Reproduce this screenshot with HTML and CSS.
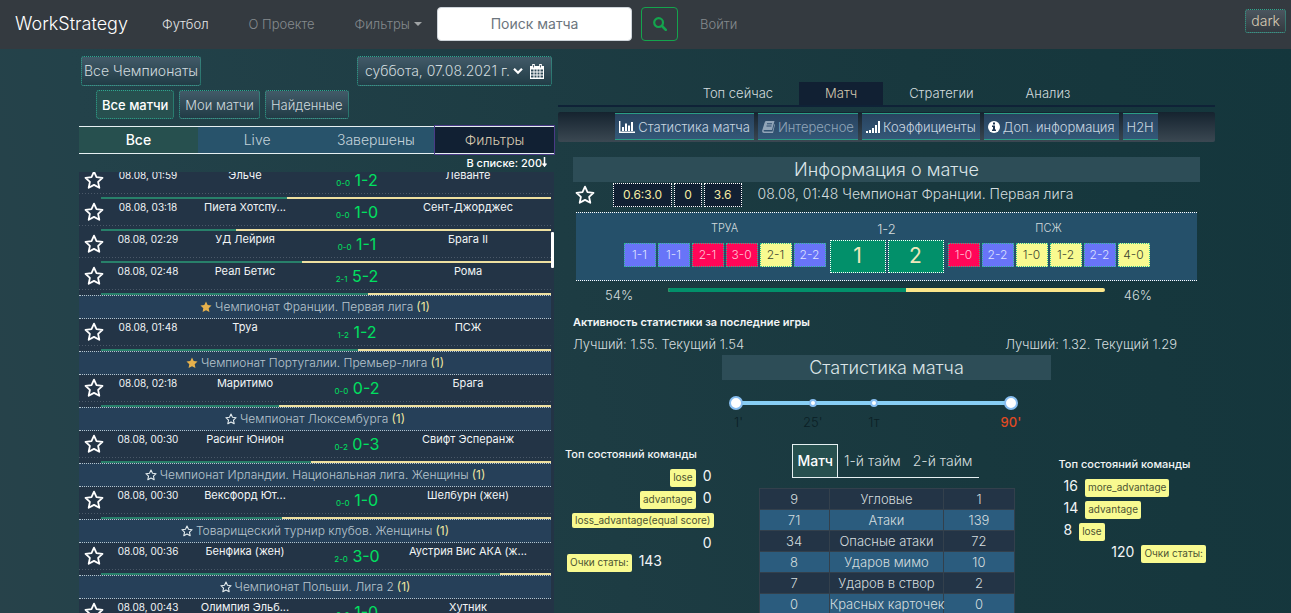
FILE: index.html
```html
<!DOCTYPE html>
<html lang="ru">
<head>
<meta charset="utf-8">
<title>WorkStrategy</title>
<link rel="stylesheet" href="styles.css">
</head>
<body>
<svg class="sprite" aria-hidden="true">
  <symbol id="star" viewBox="0 0 20 20"><path d="M10 1.6l2.5 5.5 6 .7-4.4 4.1 1.2 5.9L10 14.9l-5.3 2.9 1.2-5.9L1.5 7.8l6-.7z" fill="none" stroke="currentColor" stroke-width="1.8" stroke-linejoin="round"/></symbol>
  <symbol id="star-full" viewBox="0 0 20 20"><path d="M10 1l2.8 5.8 6.4.8-4.7 4.4 1.2 6.4L10 15.300l-5.700 3.100 1.200-6.400L.8 7.600l6.400-.8z" fill="currentColor"/></symbol>
</svg>

<header class="navbar">
  <a class="brand" href="#">WorkStrategy</a>
  <nav class="nav-links">
    <a class="active" href="#">Футбол</a>
    <a href="#">О Проекте</a>
    <a class="dropdown" href="#">Фильтры</a>
  </nav>
  <form class="search">
    <input type="text" placeholder="Поиск матча" aria-label="Поиск матча">
    <button type="button" aria-label="Искать"><svg width="14" height="14" viewBox="0 0 14 14"><circle cx="5.600" cy="5.600" r="4.400" fill="none" stroke="currentColor" stroke-width="2.200"/><path d="M9 9l3.800 3.800" stroke="currentColor" stroke-width="2.600" stroke-linecap="round"/></svg></button>
  </form>
  <a class="login" href="#">Войти</a>
  <button class="soft theme" type="button">dark</button>
</header>

<main class="page">
  <section class="matches">
    <div class="top-row">
      <button class="soft" type="button">Все Чемпионаты</button>
      <button class="soft date" type="button">суббота, 07.08.2021 г.
        <svg width="10" height="8" viewBox="0 0 10 8"><path d="M1 1.800l4 4 4-4" fill="none" stroke="#fff" stroke-width="2.200"/></svg>
        <svg class="calendar" width="14" height="15" viewBox="0 0 14 15"><path d="M0 2h14v13H0z" fill="currentColor"/><path d="M3.500 0v4M10.500 0v4" stroke="#fff" stroke-width="2.600"/><path d="M3.500 1v2.500M10.500 1v2.500" stroke="#345" stroke-width=".8"/><path d="M1 5.500h2.500v2H1zM4.500 5.500h2v2h-2zM7.500 5.500h2v2h-2zM10.500 5.500h2.500v2h-2.500zM1 8.500h2.500v2H1zM4.500 8.500h2v2h-2zM7.500 8.500h2v2h-2zM10.500 8.500h2.500v2h-2.500zM1 11.500h2.500v2H1zM4.500 11.500h2v2h-2zM7.500 11.500h2v2h-2zM10.500 11.500h2.500v2h-2.500z" fill="#2f4a58"/></svg>
      </button>
    </div>
    <div class="scope-row">
      <button class="soft on" type="button">Все матчи</button>
      <button class="soft" type="button">Мои матчи</button>
      <button class="soft" type="button">Найденные</button>
    </div>
    <div class="status-tabs">
      <button class="on" type="button">Все</button>
      <button type="button">Live</button>
      <button type="button">Завершены</button>
      <button class="filters" type="button">Фильтры</button>
    </div>
    <div class="count">В списке: 200<svg width="5" height="10" viewBox="0 0 5 10"><path d="M2.500 0v9M.5 6.500l2 2.500 2-2.500" fill="none" stroke="currentColor" stroke-width="1.500"/></svg></div>

    <div class="viewport">
      <div class="list">
        <article class="match"><button class="fav" type="button" aria-label="В избранное"><svg><use href="#star"/></svg></button><time>08.08, 01:59</time><span class="team">Эльче</span><span class="score"><small>0-0</small> 1-2</span><span class="team">Леванте</span><i class="bar"><b style="width:41.3%"></b></i></article>
        <article class="match"><button class="fav" type="button" aria-label="В избранное"><svg><use href="#star"/></svg></button><time>08.08, 03:18</time><span class="team">Пиета Хотспу...</span><span class="score"><small>0-0</small> 1-0</span><span class="team">Сент-Джорджес</span><i class="bar"><b style="width:30%"></b></i></article>
        <article class="match"><button class="fav" type="button" aria-label="В избранное"><svg><use href="#star"/></svg></button><time>08.08, 02:29</time><span class="team">УД Лейрия</span><span class="score"><small>0-0</small> 1-1</span><span class="team">Брага II</span><i class="bar"><b style="width:44.7%"></b></i></article>
        <article class="match"><button class="fav" type="button" aria-label="В избранное"><svg><use href="#star"/></svg></button><time>08.08, 02:48</time><span class="team">Реал Бетис</span><span class="score"><small>2-1</small> 5-2</span><span class="team">Рома</span><i class="bar"><b style="width:59.3%"></b></i></article>
        <h3 class="league"><svg class="gold"><use href="#star-full"/></svg>Чемпионат Франции. Первая лига <em>(1)</em></h3>
        <article class="match"><button class="fav" type="button" aria-label="В избранное"><svg><use href="#star"/></svg></button><time>08.08, 01:48</time><span class="team">Труа</span><span class="score"><small>1-2</small> 1-2</span><span class="team">ПСЖ</span><i class="bar"><b style="width:57.1%"></b></i></article>
        <h3 class="league"><svg class="gold"><use href="#star-full"/></svg>Чемпионат Португалии. Премьер-лига <em>(1)</em></h3>
        <article class="match"><button class="fav" type="button" aria-label="В избранное"><svg><use href="#star"/></svg></button><time>08.08, 02:18</time><span class="team">Маритимо</span><span class="score"><small>0-0</small> 0-2</span><span class="team">Брага</span><i class="bar"><b style="width:39.6%"></b></i></article>
        <h3 class="league"><svg><use href="#star"/></svg>Чемпионат Люксембурга <em>(1)</em></h3>
        <article class="match"><button class="fav" type="button" aria-label="В избранное"><svg><use href="#star"/></svg></button><time>08.08, 00:30</time><span class="team">Расинг Юнион</span><span class="score"><small>0-2</small> 0-3</span><span class="team">Свифт Эсперанж</span><i class="bar"><b style="width:46.7%"></b></i></article>
        <h3 class="league"><svg><use href="#star"/></svg>Чемпионат Ирландии. Национальная лига. Женщины <em>(1)</em></h3>
        <article class="match"><button class="fav" type="button" aria-label="В избранное"><svg><use href="#star"/></svg></button><time>08.08, 00:30</time><span class="team">Вексфорд Ют...</span><span class="score"><small>0-0</small> 1-0</span><span class="team">Шелбурн (жен)</span><i class="bar"><b style="width:40.2%"></b></i></article>
        <h3 class="league"><svg><use href="#star"/></svg>Товарищеский турнир клубов. Женщины <em>(1)</em></h3>
        <article class="match"><button class="fav" type="button" aria-label="В избранное"><svg><use href="#star"/></svg></button><time>08.08, 00:36</time><span class="team">Бенфика (жен)</span><span class="score"><small>2-0</small> 3-0</span><span class="team">Аустрия Вис АКА (ж...</span><i class="bar"><b style="width:88.7%"></b></i></article>
        <h3 class="league"><svg><use href="#star"/></svg>Чемпионат Польши. Лига 2 <em>(1)</em></h3>
        <article class="match"><button class="fav" type="button" aria-label="В избранное"><svg><use href="#star"/></svg></button><time>08.08, 00:43</time><span class="team">Олимпия Эльб...</span><span class="score"><small>0-0</small> 1-0</span><span class="team">Хутник</span><i class="bar"><b style="width:50%"></b></i></article>
      </div>
    </div>
  </section>

  <section class="details">
    <nav class="main-tabs">
      <a href="#">Топ сейчас</a>
      <a class="on" href="#">Матч</a>
      <a href="#">Стратегии</a>
      <a href="#">Анализ</a>
    </nav>
    <div class="toolbar">
      <button type="button"><svg width="16" height="12" viewBox="0 0 16 12"><path d="M.700 0v11.300H16" fill="none" stroke="currentColor" stroke-width="1.400"/><path d="M4 10V6M7 10V2.500M10 10V4.500M13 10V1" stroke="currentColor" stroke-width="2"/></svg>Статистика матча</button>
      <button class="muted" type="button"><svg width="13" height="12" viewBox="0 0 13 12"><path d="M4 0h8.500L10 9H2.500q-1 0-1 .700T2.500 10.500h8L12.500 3l.5.500-2 8.500H2Q-.3 12 .2 9.500L2.500 2Q3 .2 4 0z" fill="currentColor"/><path d="M5 2.800h5M4.500 5h5" stroke="#2c4a6c"/></svg>Интересное</button>
      <button type="button"><svg width="14" height="12" viewBox="0 0 14 12"><path d="M1 12v-2M4 12V9M7 12V7M10 12V4M13 12V0" stroke="currentColor" stroke-width="2"/></svg>Коэффициенты</button>
      <button type="button"><svg width="12" height="12" viewBox="0 0 12 12"><circle cx="6" cy="6" r="6" fill="#fff"/><path d="M5 1.500h2v2H5zM4 4.500h3v4h1V10H4V8.500h1V6H4z" fill="#1d3450"/></svg>Доп. информация</button>
      <button type="button">H2H</button>
    </div>

    <div class="info">
      <h2 class="title">Информация о матче</h2>
      <div class="meta">
        <button class="fav" type="button" aria-label="В избранное"><svg><use href="#star"/></svg></button>
        <div class="odds"><span>0.6:3.0</span><span>0</span><span>3.6</span></div>
        <span class="when">08.08, 01:48 Чемпионат Франции. Первая лига</span>
      </div>
      <div class="board">
        <div class="side">
          <span class="name">ТРУА</span>
          <div class="chips"><span class="draw">1-1</span><span class="draw">1-1</span><span class="loss">2-1</span><span class="loss">3-0</span><span class="win">2-1</span><span class="draw">2-2</span></div>
        </div>
        <div class="middle">
          <span class="half">1-2</span>
          <div class="goals"><span>1</span><span>2</span></div>
        </div>
        <div class="side">
          <span class="name">ПСЖ</span>
          <div class="chips"><span class="loss">1-0</span><span class="draw">2-2</span><span class="win">1-0</span><span class="win">1-2</span><span class="draw">2-2</span><span class="win">4-0</span></div>
        </div>
      </div>
      <div class="share"><span>54%</span><div class="share-bar"><b style="width:54.4%"></b></div><span>46%</span></div>
      <h4 class="activity">Активность статистики за последние игры</h4>
      <div class="best"><span>Лучший: 1.55. Текущий 1.54</span><span>Лучший: 1.32. Текущий 1.29</span></div>
    </div>

    <h2 class="title narrow">Статистика матча</h2>
    <div class="period">
      <div class="rail"><i style="left:28%"></i><i style="left:50.2%"></i></div>
      <input type="range" min="0" max="90" value="0" aria-label="Начало периода">
      <input type="range" min="0" max="90" value="90" aria-label="Конец периода">
      <div class="marks"><span style="left:1%">1'</span><span style="left:28%">25'</span><span style="left:50.2%">1т</span><span class="end" style="left:100%">90'</span></div>
    </div>

    <div class="stats">
      <div class="states home">
        <h4>Топ состояний команды</h4>
        <p><mark>lose</mark><b>0</b></p>
        <p><mark>advantage</mark><b>0</b></p>
        <p class="long"><mark>loss_advantage(equal score)</mark><b>0</b></p>
        <p class="total"><mark>Очки статы:</mark><b>143</b></p>
      </div>
      <div class="center">
        <div class="half-tabs"><button class="on" type="button">Матч</button><button type="button">1-й тайм</button><button type="button">2-й тайм</button></div>
        <table>
          <tr><td>9</td><td>Угловые</td><td>1</td></tr>
          <tr><td>71</td><td>Атаки</td><td>139</td></tr>
          <tr><td>34</td><td>Опасные атаки</td><td>72</td></tr>
          <tr><td>8</td><td>Ударов мимо</td><td>10</td></tr>
          <tr><td>7</td><td>Ударов в створ</td><td>2</td></tr>
          <tr><td>0</td><td>Красных карточек</td><td>0</td></tr>
        </table>
      </div>
      <div class="states away">
        <h4>Топ состояний команды</h4>
        <p><b>16</b><mark>more_advantage</mark></p>
        <p><b>14</b><mark>advantage</mark></p>
        <p><b>8</b><mark>lose</mark></p>
        <p class="total"><b>120</b><mark>Очки статы:</mark></p>
      </div>
    </div>
  </section>
</main>
</body>
</html>
```

FILE: styles.css
```css
* { box-sizing: border-box; }

body {
  margin: 0;
  height: 100vh;
  overflow: hidden;
  display: flex;
  flex-direction: column;
  background: linear-gradient(80deg, #27424a 0%, #23424a 12%, #1d3c43 45%, #18383e 72%, #14363c 100%);
  color: #d3dcde;
  font: 300 13px/20px Inter, "Open Sans", sans-serif;
}

button, input { font: inherit; color: inherit; }
button { padding: 0; cursor: pointer; white-space: nowrap; }
a { color: inherit; text-decoration: none; }
h2, h3, h4, p { margin: 0; font-weight: 300; }
.sprite { position: absolute; width: 0; height: 0; }

/* Navbar */
.navbar {
  display: flex;
  align-items: center;
  flex: none;
  height: 49px;
  padding: 0 5px 2px 15px;
  background: #343a40;
}
.brand { width: 147px; font-size: 18px; color: #fff; }
.nav-links { display: flex; gap: 40px; width: 275px; color: #858a8e; }
.nav-links .active { color: #e6e8e9; }
.dropdown::after {
  content: "";
  display: inline-block;
  margin-left: 4px;
  vertical-align: 3px;
  border: 4px solid transparent;
  border-top-color: #a0a4a6;
  border-bottom: 0;
}
.search { display: flex; gap: 9px; }
.search input {
  width: 195px;
  height: 34px;
  padding: 0 10px;
  border: 1px solid #ced4da;
  border-radius: 4px;
  background: #fff;
  color: #495057;
  text-align: center;
  font-size: 14px;
}
.search input::placeholder { color: #6c757d; opacity: 1; font-weight: 400; }
.search button {
  display: grid;
  place-items: center;
  width: 37px;
  height: 34px;
  border: 1px solid #14a44d;
  border-radius: 4px;
  background: none;
  color: #14a44d;
}
.login { margin-left: 22px; color: #858a8e; }

.soft {
  height: 30px;
  padding: 0 2px;
  border: 1px dotted #2fa890;
  border-radius: 3px;
  background: linear-gradient(#425a68, #213c46);
  color: #cfd9dd;
  font-size: 14px;
}
.theme {
  height: 24px;
  padding: 0 5px;
  margin: 0 0 5px auto;
  background: linear-gradient(#4b565f, #343a40);
  color: #d9ccb4;
  line-height: 18px;
}

/* Columns */
.page {
  flex: 1;
  min-height: 0;
  display: grid;
  grid-template-columns: 475fr 657fr;
  gap: 4px;
  padding: 0 76px 0 79px;
}

/* Match list */
.matches { display: flex; flex-direction: column; min-width: 0; min-height: 0; }
.top-row { display: flex; justify-content: space-between; padding: 7px 2px 4px; }
.date { display: flex; align-items: center; gap: 3px; padding: 0 7px; }
.calendar { margin-left: 4px; color: #fff; }
.scope-row { display: flex; gap: 5px; padding-left: 17px; }
.scope-row .soft { height: 29px; padding: 0 5px; font-size: 13px; }
.scope-row .on { background: #27504f; color: #fff; font-weight: 500; }
.status-tabs { display: grid; grid-template-columns: repeat(4, 1fr); margin-top: 7px; }
.status-tabs button {
  height: 28px;
  border: solid #e6f0f2;
  border-width: 1px 0;
  background: #28536b;
  color: #c3d2da;
  font-size: 14px;
}
.status-tabs .on { background: #27504f; color: #fff; font-weight: 500; }
.status-tabs .filters {
  background: #112033;
  color: #d6c9b0;
  outline: 1px solid #4a3a86;
}
.count {
  height: 18px;
  padding-right: 7px;
  text-align: right;
  font-size: 11px;
  line-height: 18px;
  font-weight: 500;
  color: #fff;
}
.viewport { position: relative; flex: 1; min-height: 0; overflow: hidden; background: #233446; }
.viewport::after {
  content: "";
  position: absolute;
  top: 60px;
  right: 0;
  width: 3px;
  height: 36px;
  border-radius: 1px;
  background: #fff;
}
.list { margin: -5px 3px 0 0; }
.match {
  display: grid;
  grid-template-columns: 30fr 78fr 116fr 108fr minmax(0, 114fr) 26fr;
  grid-template-rows: 27px 5px;
  background: linear-gradient(90deg, #4a5868 1px, transparent 1px) 0 26px / 3px 1px repeat-x;
  text-align: center;
  font-size: 11px;
  line-height: 16px;
  font-weight: 400;
  color: #f2f5f6;
}
.match time { font-size: 10px; }
.fav { border: 0; background: none; color: #fff; }
.fav svg { display: block; width: 20px; height: 20px; }
.match .fav { align-self: start; padding: 3px 0 0 5px; }
.match .team { display: flex; justify-content: center; white-space: nowrap; }
.score { font-size: 16px; line-height: 27px; color: #00e060; }
.score small { font-size: 8px; }
.bar {
  grid-column: 1 / -1;
  height: 2px;
  margin: 3px 0 0 22px;
  background: #eee0a0;
}
.bar b { display: block; height: 2px; background: #28806a; }
.league {
  display: flex;
  align-items: center;
  justify-content: center;
  height: 24px;
  border: dotted #b5c3cc;
  border-width: 1px 0;
  background: #264059;
  font-size: 12px;
  color: #b8c5ce;
}
.league svg { width: 12px; height: 12px; margin-right: 3px; color: #e5edf0; }
.league .gold { color: #e5b04c; }
.league em { margin-left: 3px; font-style: normal; font-weight: 400; color: #eee6a0; }

/* Details */
.details { min-width: 0; }
.main-tabs {
  display: flex;
  justify-content: center;
  margin-top: 33px;
  border-bottom: 2px solid #0f2237;
}
.main-tabs a { padding: 0 26px; line-height: 23px; color: #d3dcde; }
.main-tabs .on { background: #112033; color: #d6c9b0; }
.toolbar {
  display: flex;
  justify-content: center;
  gap: 4px;
  height: 30px;
  margin-top: 5px;
  padding: 1px 0 2px;
  border-radius: 2px;
  background: linear-gradient(#15232f, #3b4852);
}
.toolbar button {
  display: flex;
  align-items: center;
  gap: 3px;
  padding: 0 4px;
  border: solid #2a9d85;
  border-width: 1px 0;
  background: linear-gradient(#28435f, #345878);
  color: #c9d6e0;
}
.toolbar svg { color: #fff; }
.toolbar .muted, .toolbar .muted svg { color: #91a5b8; }

.info { padding: 15px 15px 0; }
.title {
  height: 25px;
  background: #2d4d57;
  text-align: center;
  font-size: 18px;
  line-height: 25px;
  color: #dce5e8;
}
.narrow { width: 50%; margin: 1px auto 0; }
.meta { display: flex; align-items: center; height: 26px; padding-left: 2px; }
.odds { display: flex; gap: 2px; margin: 0 16px 0 18px; }
.odds span {
  height: 24px;
  padding: 0 9px;
  border: 1px dotted #fff;
  background: #112033;
  font-size: 12px;
  line-height: 21px;
  font-weight: 400;
  color: #f4eca4;
}
.when { padding-bottom: 2px; font-size: 14px; }
.board {
  display: flex;
  justify-content: center;
  gap: 4px;
  height: 69px;
  margin: 4px 3px 0;
  border: dotted #fff;
  border-width: 1px 0;
  background: #25506a;
  text-align: center;
}
.name { display: block; padding-top: 6px; font-size: 11px; line-height: 18px; }
.chips { display: flex; gap: 2px; margin-top: 6px; }
.chips span {
  width: 32px;
  height: 24px;
  border: 1px dotted #2fb890;
  font-size: 12px;
  line-height: 22px;
}
.chips .draw { background: #6874f8; color: #dfe3ff; }
.chips .loss { background: #ff0558; color: #ffc4d6; }
.chips .win { background: #f8fa90; color: #3c4430; }
.half { display: block; padding-top: 6px; line-height: 20px; }
.goals { display: flex; gap: 2px; margin-top: 1px; }
.goals span {
  width: 56px;
  height: 33px;
  border: 1px dotted #fff;
  background: #02906a;
  font-size: 21px;
  line-height: 30px;
  font-weight: 400;
  color: #eee8bc;
}
.share { display: flex; padding: 4px 48px 0 32px; }
.share-bar { flex: 1; height: 4px; margin: 3px 19px 0 35px; border-radius: 2px; overflow: hidden; background: #fbe68a; }
.share-bar b { display: block; height: 4px; background: #02906a; }
.activity { margin-top: 7px; font-size: 11px; font-weight: 600; color: #f2f5f6; }
.best { display: flex; justify-content: space-between; padding: 2px 23px 0 0; line-height: 20px; }

/* Period slider */
.period { position: relative; width: 44%; margin: 15px 0 0 26%; padding-top: 6px; }
.rail { position: relative; height: 4px; margin: 0 7px; background: #87cef5; }
.rail i {
  position: absolute;
  top: -2px;
  width: 8px;
  height: 8px;
  margin-left: -4px;
  border: 2px solid #87bdf0;
  border-radius: 50%;
  background: #fff;
}
.period input {
  position: absolute;
  top: 1px;
  left: 0;
  width: 100%;
  height: 14px;
  margin: 0;
  appearance: none;
  background: none;
  pointer-events: none;
}
.period input::-webkit-slider-thumb {
  appearance: none;
  width: 14px;
  height: 14px;
  border: 2px solid #87bdf0;
  border-radius: 50%;
  background: #fff;
  pointer-events: auto;
}
.marks { position: relative; height: 28px; margin: 3px 7px 0; color: #0b2025; }
.marks span { position: absolute; top: 4px; transform: translateX(-50%); }
.marks .end { font-weight: 500; color: #e04a22; }

/* Team states and stats table */
.stats { display: grid; grid-template-columns: 1fr 256px 1fr; gap: 44px; margin-top: 8px; }
.states h4 { font-size: 11px; line-height: 20px; font-weight: 500; color: #f2f5f6; }
.states p { display: flex; align-items: flex-start; gap: 7px; height: 22px; }
.states mark {
  height: 18px;
  padding: 0 3px;
  border-radius: 2px;
  background: #f8fa90;
  font-size: 10px;
  line-height: 16px;
  font-weight: 400;
  color: #4d5433;
  white-space: nowrap;
}
.states b { font-size: 14px; line-height: 14px; font-weight: 400; color: #f2f5f6; }
.home { padding: 0 3px 0 7px; }
.home h4 { margin-bottom: 5px; }
.home p { justify-content: flex-end; }
.home .long { flex-wrap: wrap; height: 41px; gap: 4px; margin-right: -2px; }
.home .long mark { height: 15px; line-height: 14px; }
.home .long b { padding-right: 2px; }
.home .total { justify-content: flex-start; padding-left: 2px; }
.away { padding: 10px 9px 0 0; }
.away h4 { margin-bottom: 5px; }
.away p { padding-left: 5px; }
.away .total { justify-content: flex-end; }
.half-tabs { display: flex; justify-content: center; padding-right: 2px; }
.half-tabs button {
  height: 34px;
  padding: 0 6px;
  border: 0 solid #e6f0f2;
  border-bottom-width: 1px;
  background: none;
  font-size: 14px;
}
.half-tabs .on { padding: 0 4px; border-width: 1px; background: #27504f; font-weight: 500; color: #fff; }
table {
  width: 100%;
  margin-top: 10px;
  border-collapse: collapse;
  table-layout: fixed;
  text-align: center;
}
td { height: 21px; padding: 0; border: 1px solid #33404c; line-height: 19px; white-space: nowrap; }
td:nth-child(2) { width: 45%; }
tr { background: #233446; }
tr:nth-child(even) { background: #2b5c7e; }
```
